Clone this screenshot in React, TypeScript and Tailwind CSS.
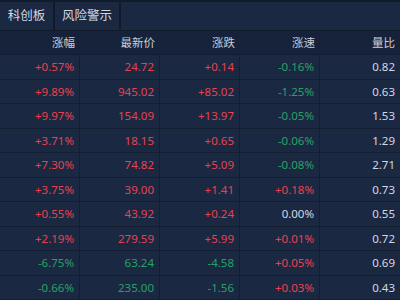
import React from "react";

type Row = {
  pct: string;
  price: string;
  chg: string;
  speed: string;
  ratio: string;
};

const rows: Row[] = [
  { pct: "+0.57%", price: "24.72", chg: "+0.14", speed: "-0.16%", ratio: "0.82" },
  { pct: "+9.89%", price: "945.02", chg: "+85.02", speed: "-1.25%", ratio: "0.63" },
  { pct: "+9.97%", price: "154.09", chg: "+13.97", speed: "-0.05%", ratio: "1.53" },
  { pct: "+3.71%", price: "18.15", chg: "+0.65", speed: "-0.06%", ratio: "1.29" },
  { pct: "+7.30%", price: "74.82", chg: "+5.09", speed: "-0.08%", ratio: "2.71" },
  { pct: "+3.75%", price: "39.00", chg: "+1.41", speed: "+0.18%", ratio: "0.73" },
  { pct: "+0.55%", price: "43.92", chg: "+0.24", speed: "0.00%", ratio: "0.55" },
  { pct: "+2.19%", price: "279.59", chg: "+5.99", speed: "+0.01%", ratio: "0.72" },
  { pct: "-6.75%", price: "63.24", chg: "-4.58", speed: "+0.05%", ratio: "0.69" },
  { pct: "-0.66%", price: "235.00", chg: "-1.56", speed: "+0.03%", ratio: "0.43" },
];

const tone = (v: string) => {
  if (v.startsWith("+")) return "text-[#e5434f]";
  if (v.startsWith("-")) return "text-[#25a267]";
  return "text-[#d3d8e0]";
};

const headers = ["涨幅", "最新价", "涨跌", "涨速", "量比"];

export default function App() {
  return (
    <div
      className="w-[400px] h-[300px] overflow-hidden bg-[#1b2842] text-[11.5px]"
      style={{ fontFamily: '"Noto Sans", "Noto Sans CJK SC", sans-serif' }}
    >
      {/* tab bar */}
      <div className="flex h-[31px] bg-[#111a2b] gap-[2px] pt-[2px] pb-[1px]">
        <div className="w-[53px] bg-[#1b2842] text-[#d3d8e0] text-[12.5px] flex items-center justify-center">
          科创板
        </div>
        <div className="w-[64px] bg-[#1b2842] text-[#d3d8e0] text-[12.5px] flex items-center justify-center">
          风险警示
        </div>
        <div className="flex-1 bg-[#1b2842]" />
      </div>

      {/* header */}
      <div className="grid grid-cols-5 h-[24px] bg-[#16213a] border-b border-[#131c2e]">
        {headers.map((h) => (
          <div
            key={h}
            className="flex items-center justify-end pr-[5px] text-[#c9ced8] text-[11.5px]"
          >
            {h}
          </div>
        ))}
      </div>

      {/* rows */}
      {rows.map((r, i) => (
        <div
          key={i}
          className="grid grid-cols-5 h-[24.5px] border-b border-[#141e31]"
        >
          {[r.pct, r.price, r.chg, r.speed, r.ratio].map((v, j) => (
            <div
              key={j}
              className={`flex items-center justify-end pr-[5px] ${
                j < 4 ? "border-r border-[#141e31]" : ""
              } ${j === 4 ? "text-[#d3d8e0]" : j === 1 ? tone(r.pct) : tone(v)}`}
            >
              {v}
            </div>
          ))}
        </div>
      ))}
    </div>
  );
}
